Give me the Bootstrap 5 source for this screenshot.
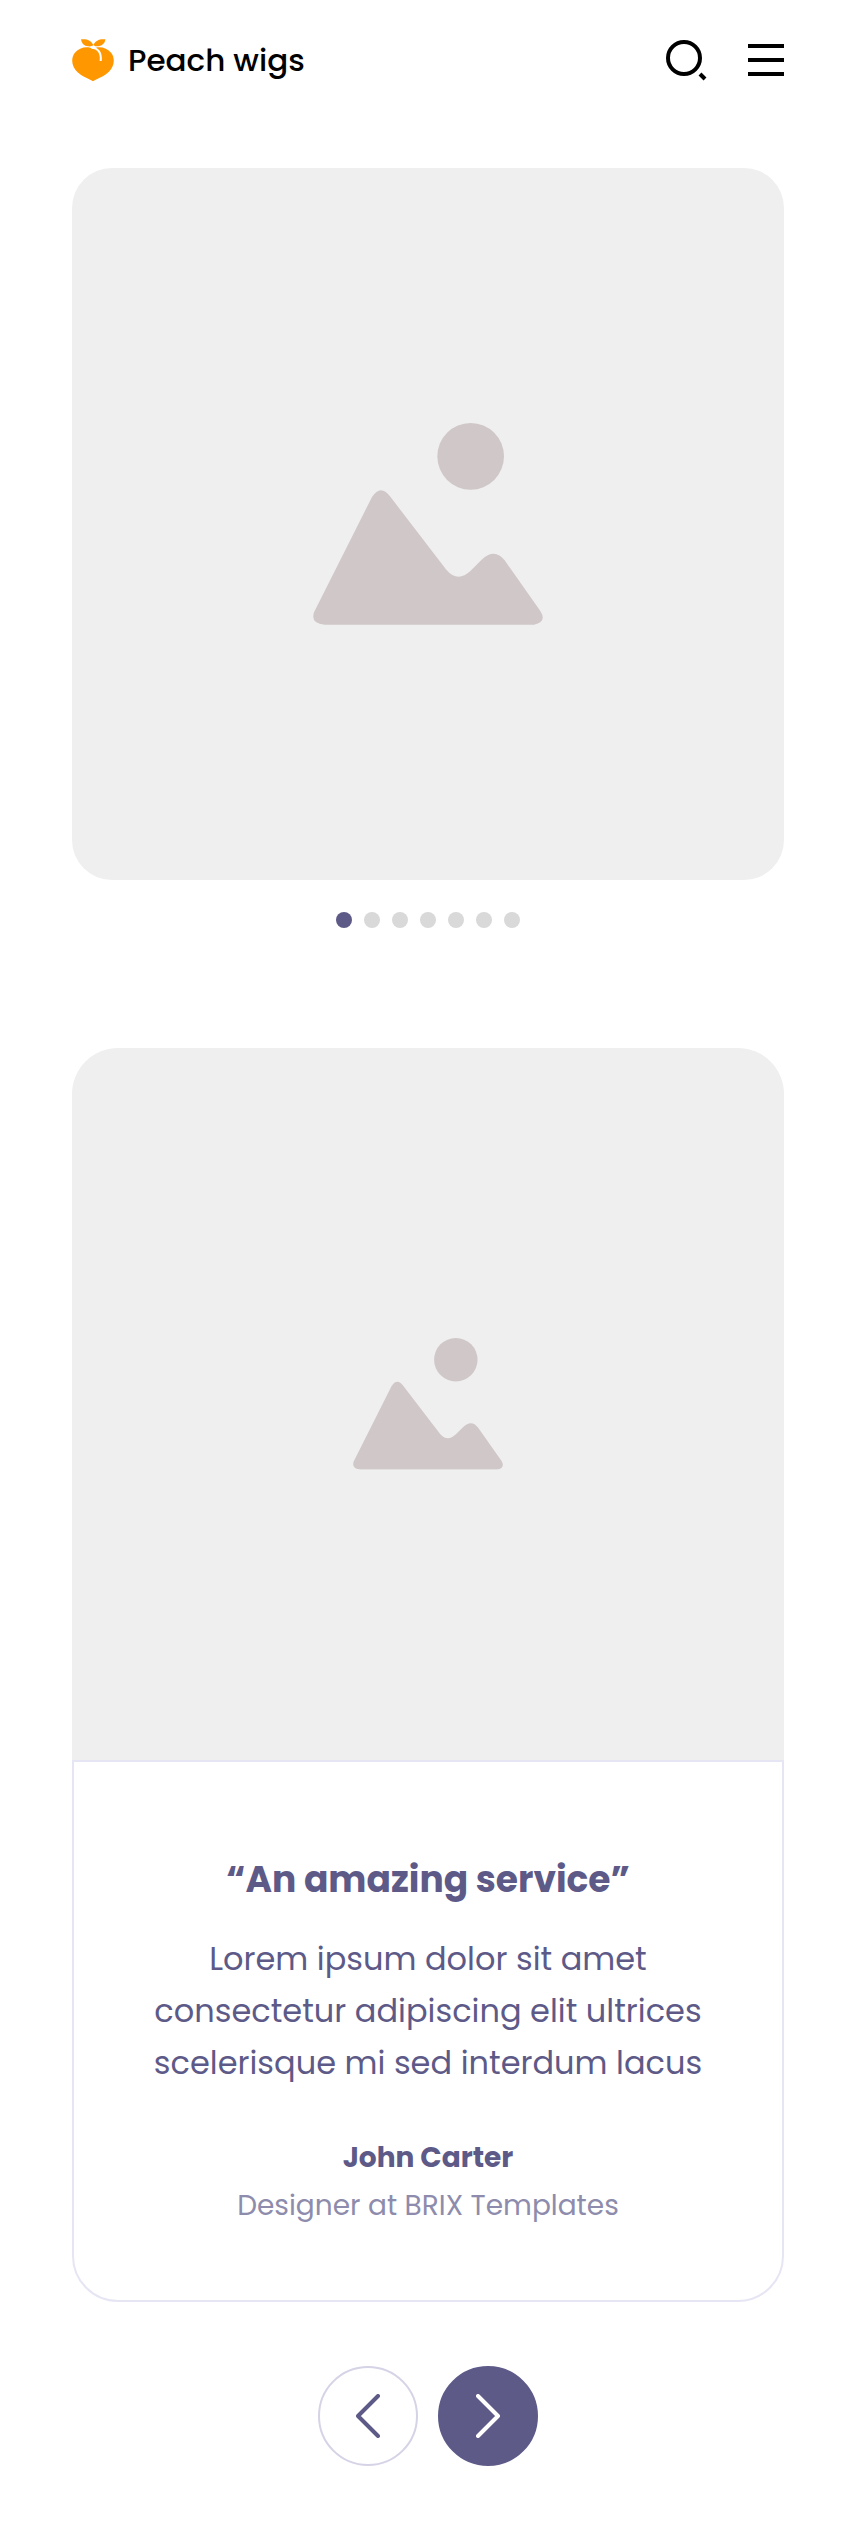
<!DOCTYPE html>
<html lang="en">
<head>
<meta charset="utf-8">
<meta name="viewport" content="width=device-width, initial-scale=1">
<title>Peach wigs</title>
<link href="https://cdn.jsdelivr.net/npm/bootstrap@5.3.0/dist/css/bootstrap.min.css" rel="stylesheet">
<style>
  :root { --ink: #5d5a88; --ink-soft: #8e8cac; --line: #e6e5f3; --blank: #efefef; --shape: #d0c7c8; }
  body { font-family: Poppins, Inter, sans-serif; color: var(--ink); background: #fff; }
  .page { padding: 0 72px 64px; }
  .topbar { height: 120px; }
  .brand-link { gap: 14px; }
  .brand-name { font-size: 31px; line-height: 40px; font-weight: 500; color: #000; }
  .tools { gap: 40px; }
  .icon-btn { color: #000; line-height: 0; }
  .placeholder-img { aspect-ratio: 1; background: var(--blank); color: var(--shape); }
  .hero { margin-top: 48px; border-radius: 40px; }
  .hero svg { width: 230px; }
  .dots { gap: 12px; padding: 32px 0 120px; }
  .dots button { width: 16px; height: 16px; background: #d9d9d9; }
  .dots button.active { background: var(--ink); }
  .review .placeholder-img { border-radius: 46px 46px 0 0; }
  .review .placeholder-img svg { width: 150px; }
  .review-body { border: 2px solid var(--line); border-radius: 0 0 46px 46px; padding: 90px 64px 70px; }
  .quote-title { font-size: 36px; line-height: 56px; font-weight: 700; margin-bottom: 25px; }
  .quote-text { font-size: 32px; line-height: 52px; margin: 0 auto 45px; }
  .author { font-size: 28px; line-height: 48px; font-weight: 700; }
  .role { font-size: 28px; line-height: 48px; color: var(--ink-soft); }
  .pager { gap: 20px; padding-top: 64px; }
  .pager button { width: 100px; height: 100px; border: 2px solid #d5d3e6; background: #fff; color: var(--ink); }
  .pager button.next { background: var(--ink); border-color: var(--ink); color: #fff; }
</style>
</head>
<body>
<svg class="d-none" aria-hidden="true">
  <symbol id="landscape" viewBox="0 0 690 606">
    <circle cx="473" cy="100" r="100"/>
    <path d="M177 222Q203 182 231 220L400 440Q434 480 472 444L506 410Q545 374 575 412L682 564Q703 597 663 605H35Q-8 602 3 568Z"/>
  </symbol>
</svg>
<div class="page">
  <header class="topbar d-flex align-items-center justify-content-between">
    <a href="#" class="brand-link d-flex align-items-center text-decoration-none">
      <svg width="42" height="43" viewBox="0 0 126 129" fill="#ff9800" aria-hidden="true">
        <path d="M27 1C44-1 58 4 64 18C70 4 84-1 100 1C99 14 90 22 74 22C70 22 67 20 64 18C60 22 54 23 49 22C36 21 29 14 27 1Z"/>
        <path d="M63 30C77 21 104 24 118 42C131 60 126 84 110 99C96 113 77 118 63 127C49 118 30 113 16 99C0 84-5 60 8 42C22 24 49 21 63 30Z"/>
        <path d="M58 26C77 26 89 40 86 66" fill="none" stroke="#fff" stroke-width="6"/>
      </svg>
      <span class="brand-name">Peach wigs</span>
    </a>
    <div class="tools d-flex align-items-center">
      <button type="button" class="icon-btn btn p-0 border-0" aria-label="Search">
        <svg width="42" height="42" viewBox="0 0 42 42" fill="none" stroke="currentColor" stroke-width="4"><circle cx="18" cy="19" r="16"/><path d="M34 35L39 40"/></svg>
      </button>
      <button type="button" class="icon-btn btn p-0 border-0" aria-label="Menu">
        <svg width="36" height="32" viewBox="0 0 36 32" fill="currentColor"><path d="M0 0h36v4H0zM0 14h36v4H0zM0 28h36v4H0z"/></svg>
      </button>
    </div>
  </header>
  <main>
    <div class="hero placeholder-img d-flex align-items-center justify-content-center">
      <svg viewBox="0 0 690 606" fill="currentColor" role="img" aria-label="Photo"><use href="#landscape"/></svg>
    </div>
    <div class="dots d-flex justify-content-center">
      <button type="button" class="btn p-0 border-0 rounded-circle active" aria-label="Slide 1"></button>
      <button type="button" class="btn p-0 border-0 rounded-circle" aria-label="Slide 2"></button>
      <button type="button" class="btn p-0 border-0 rounded-circle" aria-label="Slide 3"></button>
      <button type="button" class="btn p-0 border-0 rounded-circle" aria-label="Slide 4"></button>
      <button type="button" class="btn p-0 border-0 rounded-circle" aria-label="Slide 5"></button>
      <button type="button" class="btn p-0 border-0 rounded-circle" aria-label="Slide 6"></button>
      <button type="button" class="btn p-0 border-0 rounded-circle" aria-label="Slide 7"></button>
    </div>
    <article class="review text-center">
      <div class="placeholder-img d-flex align-items-center justify-content-center">
        <svg viewBox="0 0 690 606" fill="currentColor" role="img" aria-label="Photo"><use href="#landscape"/></svg>
      </div>
      <div class="review-body">
        <h2 class="quote-title">“An amazing service”</h2>
        <p class="quote-text">Lorem ipsum dolor sit amet<br>consectetur adipiscing elit ultrices<br>scelerisque mi sed interdum lacus</p>
        <div class="author">John Carter</div>
        <div class="role">Designer at BRIX Templates</div>
      </div>
    </article>
    <div class="pager d-flex justify-content-center">
      <button type="button" class="btn p-0 rounded-circle" aria-label="Previous">
        <svg width="24" height="44" viewBox="0 0 24 44" fill="none" stroke="currentColor" stroke-width="4" stroke-linecap="round" stroke-linejoin="round"><path d="M22 2L2 22L22 42"/></svg>
      </button>
      <button type="button" class="next btn p-0 rounded-circle" aria-label="Next">
        <svg width="24" height="44" viewBox="0 0 24 44" fill="none" stroke="currentColor" stroke-width="4" stroke-linecap="round" stroke-linejoin="round"><path d="M2 2L22 22L2 42"/></svg>
      </button>
    </div>
  </main>
</div>
<script src="https://cdn.jsdelivr.net/npm/bootstrap@5.3.0/dist/js/bootstrap.bundle.min.js"></script>
</body>
</html>
